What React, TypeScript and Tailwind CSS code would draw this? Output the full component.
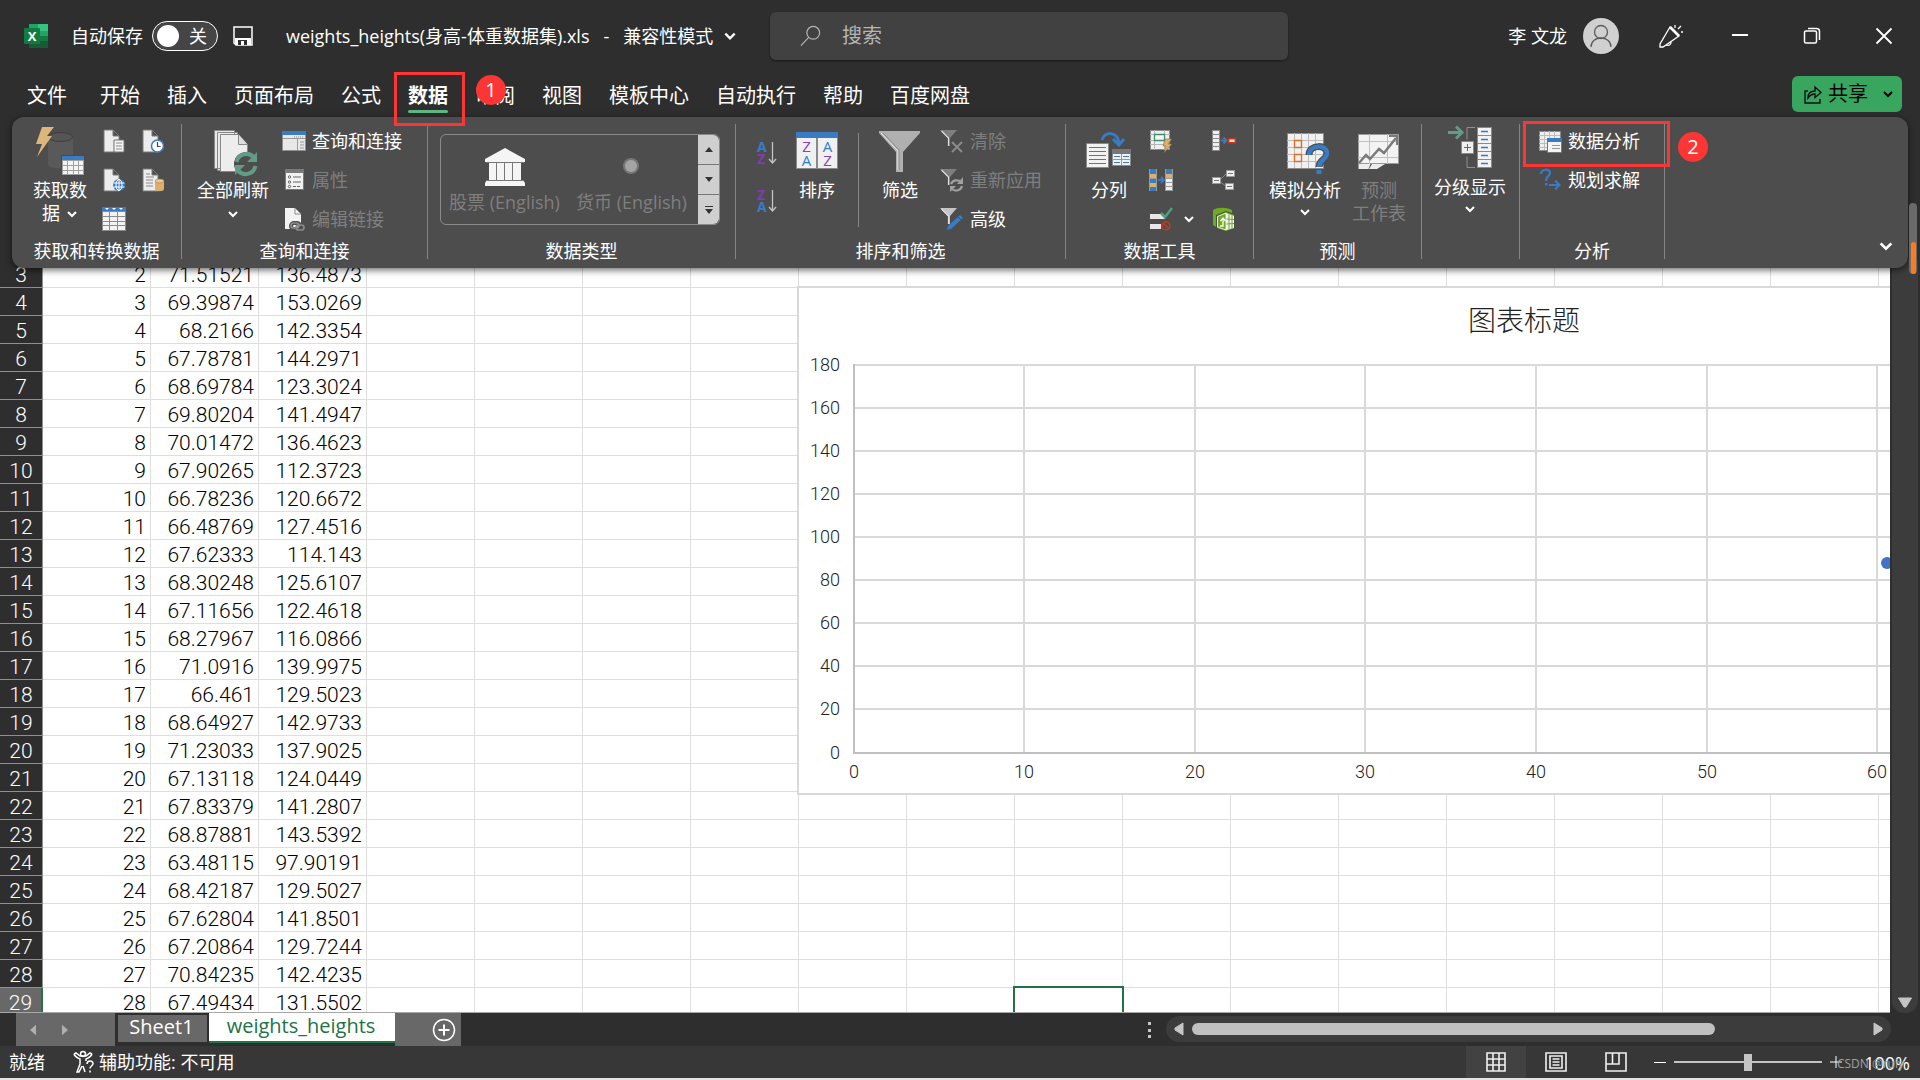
import React, { useState } from "react";
import clsx from "clsx";

const TABS = [
  "文件",
  "开始",
  "插入",
  "页面布局",
  "公式",
  "数据",
  "审阅",
  "视图",
  "模板中心",
  "自动执行",
  "帮助",
  "百度网盘",
];

const ROWS = [
  ["2", "71.51521", "136.4873"],
  ["3", "69.39874", "153.0269"],
  ["4", "68.2166", "142.3354"],
  ["5", "67.78781", "144.2971"],
  ["6", "68.69784", "123.3024"],
  ["7", "69.80204", "141.4947"],
  ["8", "70.01472", "136.4623"],
  ["9", "67.90265", "112.3723"],
  ["10", "66.78236", "120.6672"],
  ["11", "66.48769", "127.4516"],
  ["12", "67.62333", "114.143"],
  ["13", "68.30248", "125.6107"],
  ["14", "67.11656", "122.4618"],
  ["15", "68.27967", "116.0866"],
  ["16", "71.0916", "139.9975"],
  ["17", "66.461", "129.5023"],
  ["18", "68.64927", "142.9733"],
  ["19", "71.23033", "137.9025"],
  ["20", "67.13118", "124.0449"],
  ["21", "67.83379", "141.2807"],
  ["22", "68.87881", "143.5392"],
  ["23", "63.48115", "97.90191"],
  ["24", "68.42187", "129.5027"],
  ["25", "67.62804", "141.8501"],
  ["26", "67.20864", "129.7244"],
  ["27", "70.84235", "142.4235"],
  ["28", "67.49434", "131.5502"],
];

const COLUMNS = Array.from({ length: 18 }, (_, i) => i);
const SELECTED_ROW = 29;
const SELECTED_COL = 9;

const Chevron = ({ className = "" }) => (
  <svg className={clsx("w-3 h-3 shrink-0", className)} viewBox="0 0 12 12" fill="none" stroke="currentColor" strokeWidth="2">
    <path d="M2 4l4 4 4-4" />
  </svg>
);

const Marker = ({ n, className }: { n: number; className: string }) => (
  <span
    className={clsx(
      "absolute z-30 flex h-[30px] w-[30px] items-center justify-center rounded-full bg-[#fc3535] text-xl leading-5 font-normal text-white",
      className
    )}
  >
    {n}
  </span>
);

/* ---------- small ribbon icons, 24x24 ---------- */

const Icon = ({ children }: { children: React.ReactNode }) => (
  <svg className="h-6 w-6 shrink-0" viewBox="0 0 24 24" fill="none">
    {children}
  </svg>
);

const Page = () => <path d="M2 1h9l6 6v16H2z M11 1v6h6" fill="#ececec" stroke="#7a7a7a" />;

const FileTextIcon = () => (
  <Icon>
    <Page />
    <path d="M12 11h10v12H12z" fill="#f5f5f5" stroke="#707070" />
    <path d="M14 14h6M14 17h6M14 20h6" stroke="#8a8a8a" />
  </Icon>
);

const FileClockIcon = () => (
  <Icon>
    <Page />
    <circle cx="16.500" cy="17" r="6" fill="#fff" stroke="#3a7cc4" strokeWidth="1.500" />
    <path d="M16.500 13v4.500h3" stroke="#444" strokeWidth="1.200" />
  </Icon>
);

const FileGlobeIcon = () => (
  <Icon>
    <Page />
    <circle cx="17" cy="17" r="6" fill="#3a7cc4" />
    <ellipse cx="17" cy="17" rx="3" ry="5.500" stroke="#fff" />
    <path d="M11.500 15h11M11.500 19h11M17 11v12" stroke="#fff" />
  </Icon>
);

const FileDbIcon = () => (
  <Icon>
    <Page />
    <path d="M5 9h8M5 12h7M5 15h7M5 18h7M5 6h4" stroke="#8a8a8a" />
    <path d="M14 13v8c0 3 9 3 9 0v-8" fill="#dcb06c" />
    <ellipse cx="18.500" cy="13" rx="4.500" ry="2" fill="#e9c78f" stroke="#a57d3f" strokeWidth=".6" />
  </Icon>
);

const TableIcon = () => (
  <Icon>
    <path d="M0 0h24v24H0z" fill="#8a8a8a" />
    <path d="M0 0h24v4H0z" fill="#3a7cc4" />
    <path d="M3 1h4l-2 2zM10 1h4l-2 2zM17 1h4l-2 2z" fill="#fff" />
    <path d="M1 5h6v4H1zM8 5h7v4H8zM16 5h7v4h-7zM1 10h6v4H1zM8 10h7v4H8zM16 10h7v4h-7zM1 15h6v3H1zM8 15h7v3H8zM16 15h7v3h-7zM1 19h6v4H1zM8 19h7v4H8zM16 19h7v4h-7z" fill="#f3f3f3" />
  </Icon>
);

const QueriesIcon = () => (
  <Icon>
    <path d="M.5 2.500h23v19H.5z" fill="#e8e8e8" stroke="#909090" />
    <path d="M0 2h24v4H0z" fill="#3a7cc4" />
    <path d="M15.500 10v11M1 9.500h22M18 13h4M18 16h4M18 19h4" stroke="#9a9a9a" />
    <path d="M12 8h9" stroke="#888" strokeDasharray="1 1" />
  </Icon>
);

const PropertiesIcon = () => (
  <Icon>
    <path d="M3.500 1.500h18v20h-18z" fill="#f2f2f2" stroke="#7a7a7a" />
    <path d="M3 1h19v4H3z" fill="#7a7a7a" />
    <circle cx="7.500" cy="9" r="1.200" stroke="#666" />
    <circle cx="7.500" cy="14" r="1.200" stroke="#666" />
    <circle cx="7.500" cy="18.500" r="1.200" stroke="#666" />
    <path d="M11 9h8M11 14h8" stroke="#666" />
    <path d="M11 18.500h8" stroke="#666" strokeDasharray="3 1" />
  </Icon>
);

const EditLinksIcon = () => (
  <Icon>
    <path d="M3 1h10l6 6v15H3z" fill="#f3f3f3" />
    <path d="M13 1v6h6" stroke="#888" />
    <rect x="9" y="16" width="9" height="6" rx="3" stroke="#4d4d4d" strokeWidth="4" />
    <rect x="9" y="16" width="8" height="5" rx="2.500" stroke="#8a8a8a" strokeWidth="1.700" />
    <rect x="14" y="18" width="8" height="5" rx="2.500" stroke="#8a8a8a" strokeWidth="1.700" />
  </Icon>
);

const SmallFunnel = ({ fill = "#7e7e7e" }) => (
  <>
    <path d="M0 1h17l-7 8v8H8V9z" fill={fill} />
    <path d="M1.500 2l7 7v8" stroke="#e0e0e0" strokeWidth="1.200" />
  </>
);

const ClearIcon = () => (
  <Icon>
    <SmallFunnel />
    <path d="M12 13l10 10M22 13L12 23" stroke="#8a8a8a" strokeWidth="2" />
  </Icon>
);

const ReapplyIcon = () => (
  <Icon>
    <SmallFunnel />
    <path d="M11 16a6 5.500 0 0 1 10-2M22 18a6 5.500 0 0 1-10 3" stroke="#a0a0a0" strokeWidth="2.200" />
    <path d="M23 9v7h-6zM10 24v-6h6z" fill="#a0a0a0" />
  </Icon>
);

const AdvancedIcon = () => (
  <Icon>
    <SmallFunnel fill="#c4c4c4" />
    <path d="M7 23l1-4L20 8l3 3-12 11z" fill="#3a7cc4" />
    <path d="M18 10l3 3" stroke="#4d4d4d" />
  </Icon>
);

const FlashFillIcon = () => (
  <Icon>
    <path d="M1.500 1.500h19v19h-19z" fill="#efefef" stroke="#8a8a8a" />
    <path d="M1 5.500h20M1 11.500h20M1 15.500h20M5.500 1v20M15.500 1v20" stroke="#b5b5b5" />
    <path d="M5.500 5.500h10v6h-10z" fill="#f6f6f6" stroke="#3f8f70" strokeWidth="1.300" />
    <path d="M16 10h7l-4 5h4l-8 9 2-7h-3z" fill="#dcb067" stroke="#6d5a35" strokeWidth=".5" />
  </Icon>
);

const RemoveDuplicatesIcon = () => (
  <Icon>
    <path d="M0 1h8v22H0z" fill="#9a9a9a" />
    <path d="M1 1h6v5H1zM1 11h6v4H1zM1 19h6v4H1z" fill="#3a7cc4" />
    <path d="M1 6h6v4H1zM1 15h6v4H1z" fill="#dcb067" />
    <path d="M16 1h8v22h-8z" fill="#9a9a9a" />
    <path d="M17 1h6v5h-6z" fill="#3a7cc4" />
    <path d="M17 6h6v4h-6z" fill="#dcb067" />
    <path d="M17 11h6v3h-6zM17 15h6v3h-6zM17 19h6v3h-6z" fill="#eee" />
    <path d="M9 12h5M12 9l3 3-3 3" stroke="#3a7cc4" strokeWidth="1.800" />
  </Icon>
);

const ValidationIcon = () => (
  <Icon>
    <path d="M1 7h11l4 5H1zM1 17h11v5H1z" fill="#e8e8e8" />
    <path d="M12 6l4 4 7-9" stroke="#4f9e83" strokeWidth="2.500" />
    <circle cx="17" cy="19" r="4" stroke="#c13c1f" strokeWidth="1.500" />
    <path d="M14 16l6 6" stroke="#c13c1f" strokeWidth="1.500" />
  </Icon>
);

const ConsolidateIcon = () => (
  <Icon>
    <path d="M0 1h8v21H0z" fill="#8a8a8a" />
    <path d="M1 2h6v3H1zM1 6h6v3H1zM1 10h6v3H1zM1 14h6v3H1zM1 18h6v3H1z" fill="#efefef" />
    <path d="M9 11.500h5M11.500 8.500l3 3-3 3" stroke="#3a7cc4" strokeWidth="1.800" />
    <path d="M16.700 9.700h6.600v4h-6.600z" fill="#f6d9d0" stroke="#c8391c" strokeWidth="1.400" />
  </Icon>
);

const RelationIcon = () => (
  <Icon>
    <path d="M7 13l8-8M7 13l8 6" stroke="#8a8a8a" />
    <path d="M.5 9.500h8v6h-8zM14.500 2.500h8v6h-8zM13.500 15.500h8v6h-8z" fill="#efefef" stroke="#9a9a9a" />
    <path d="M2 12.500h5M16 5.500h5M15 18.500h5" stroke="#777" />
  </Icon>
);

const DataModelIcon = () => (
  <Icon>
    <path d="M1 3c5-3 13-3 19 0v3L14 4 4 8v12l-3-2z" fill="#6eaa23" />
    <path d="M5 9l9-4 8 3v13l-8 3-9-3z" fill="#6eaa23" />
    <path d="M14 6l8 3v12l-8 2z" fill="#f2f2f2" />
    <path d="M14 12l8 .5M14 17l8-.5M17 7v15M20 8v14" stroke="#6eaa23" />
    <path d="M5.500 20V9.500L14 6v17z" stroke="#fff" strokeWidth=".8" />
    <path d="M8 19h3v-7M8.500 14l2.500-3 2.500 3" stroke="#fff" strokeWidth="1.300" />
  </Icon>
);

const AnalysisIcon = () => (
  <Icon>
    <path d="M1.500 2.500h21v19h-21z" fill="#eee" stroke="#8a8a8a" />
    <path d="M1 6.500h21M1 10.500h21M1 14.500h21M1 18.500h21M6.500 2v19M11.500 2v19M16.500 2v19" stroke="#bdbdbd" />
    <path d="M9.500 9.500h14v14h-14z" fill="#f4f4f4" stroke="#777" />
    <path d="M9 9h15v4H9z" fill="#3a7cc4" />
    <path d="M14 16.500h8M14 19.500h8" stroke="#999" />
  </Icon>
);

const SolverIcon = () => (
  <Icon>
    <path d="M3 6c0-5 9-6 9-1 0 3-4 3-4 8" stroke="#3a7cc4" strokeWidth="2.200" />
    <path d="M7 15h2.500v2.500H7z" fill="#3a7cc4" />
    <path d="M11 17h10M17 12.500l4.500 4.500-4.500 4.500" stroke="#3a7cc4" strokeWidth="2" />
  </Icon>
);

/* ---------- large ribbon icons ---------- */

const GetDataIcon = () => (
  <svg className="h-[54px] w-14" viewBox="0 0 56 54">
    <path d="M16 13v26c0 6 25 6 25 0V13z" fill="#595959" />
    <ellipse cx="28.500" cy="12" rx="12" ry="4.500" fill="#555" stroke="#3e3e3e" />
    <path d="M10 2h12l-7 9h5L5 32l5-13H4z" fill="#dcb67a" />
    <path d="M29 30h24v21H29z" fill="#4a4a4a" />
    <path d="M30 31h22v19H30z" fill="#a0a0a0" />
    <path d="M30 31h22v4H30z" fill="#3a7cc4" />
    <path d="M31 36h4v4h-4zM36 36h5v4h-5zM42 36h4v4h-4zM47 36h4v4h-4zM31 41h4v4h-4zM36 41h5v4h-5zM42 41h4v4h-4zM47 41h4v4h-4zM31 46h4v3h-4zM36 46h5v3h-5zM42 46h4v3h-4zM47 46h4v3h-4z" fill="#f4f4f4" />
  </svg>
);

const RefreshIcon = () => (
  <svg className="h-[54px] w-[50px]" viewBox="0 0 50 54" fill="none">
    <path d="M6.500 5.500h20v38h-20zM9.500 7.500h20v38h-20z" fill="#e8e8e8" stroke="#888" />
    <path d="M12.500 9.500h18l9 10v27h-27z" fill="#ededed" stroke="#888" />
    <path d="M30.500 9.500v10h9" fill="#ddd" stroke="#888" />
    <circle cx="38" cy="39" r="12" fill="#4d4d4d" />
    <path d="M28.500 37a10 10 0 0 1 17-5M47.500 41a10 10 0 0 1-17 5" stroke="#629c87" strokeWidth="4" />
    <path d="M49 27v10H39zM27 50V40h10z" fill="#629c87" />
  </svg>
);

const SortIcon = () => (
  <svg className="h-[54px] w-11" viewBox="0 0 44 54" fontFamily="Open Sans, sans-serif" fontSize="15" fontWeight="400">
    <path d="M1 8h42v36H1z" fill="#8a8a8a" />
    <path d="M1 7h42v6H1z" fill="#3a7cc4" />
    <path d="M2 13h19v30H2zM23 13h19v30H23z" fill="#f0f0f0" />
    <g textAnchor="middle">
      <text x="11.500" y="27" fill="#8a43b3">Z</text>
      <text x="11.500" y="41" fill="#2f7ec7">A</text>
      <text x="32.500" y="27" fill="#2f7ec7">A</text>
      <text x="32.500" y="41" fill="#8a43b3">Z</text>
    </g>
  </svg>
);

const SortOrderIcon = ({ desc = false }) => (
  <svg className="h-6 w-6 overflow-visible" viewBox="0 0 24 24" fontFamily="Open Sans, sans-serif" fontSize="14" fontWeight="700">
    <text x="1" y="11" fill={desc ? "#7d3fa8" : "#3a7cc4"}>{desc ? "Z" : "A"}</text>
    <text x="1" y="23" fill={desc ? "#3a7cc4" : "#7d3fa8"}>{desc ? "A" : "Z"}</text>
    <path d="M16.500 1v21M13 18l3.500 4 3.500-4" fill="none" stroke="#c4c4c4" strokeWidth="1.300" />
  </svg>
);

const FunnelIcon = () => (
  <svg className="h-[54px] w-[42px]" viewBox="0 0 42 54" fill="none">
    <path d="M0 6h41v2L24 27v20h-7V27L0 8z" fill="#b0b0b0" />
    <path d="M2 8l17 18v19" stroke="#ececec" />
    <path d="M4 8l16 17v20" stroke="#8a8a8a" />
  </svg>
);

const SplitIcon = () => (
  <svg className="h-[54px] w-[46px]" viewBox="0 0 46 54" fill="none">
    <path d="M.5 18.500h22v24H.5z" fill="#f2f2f2" stroke="#8a8a8a" />
    <path d="M3 22.500h17M3 26.500h17M3 30.500h17M3 34.500h17M3 38.500h17" stroke="#3a7cc4" />
    <path d="M26.500 24.500h18v16h-18z" fill="#f2f2f2" stroke="#8a8a8a" />
    <path d="M26 24h19v5H26z" fill="#777" />
    <path d="M35.500 29v11M26 34.500h19" stroke="#999" />
    <path d="M28 31.500h6M37 31.500h6M28 37.500h6M37 37.500h6" stroke="#3a7cc4" />
    <path d="M16 15c2-8 15-10 17 3" stroke="#3a7cc4" strokeWidth="3" />
    <path d="M27 14l6 6 5-6" stroke="#3a7cc4" strokeWidth="3" />
  </svg>
);

const WhatIfIcon = () => (
  <svg className="h-[54px] w-12" viewBox="0 0 48 54" fill="none">
    <path d="M6.500 8.500h36v35h-36z" fill="#f1f1f1" stroke="#8a8a8a" />
    <path d="M6 15.500h36M6 22.500h36M6 29.500h36M6 36.500h36M13.500 8v35M20.500 8v35M27.500 8v35M34.500 8v35" stroke="#bcbcbc" />
    <path d="M13.500 15.500h7v7h-7zM13.500 29.500h7v7h-7z" stroke="#d9702a" strokeWidth="1.400" />
    <path d="M28 30c0-11 19-11 18-1-1 6-8 6-8 13" stroke="#4d4d4d" strokeWidth="7" />
    <path d="M28 30c0-11 19-11 18-1-1 6-8 6-8 13" stroke="#3a7cc4" strokeWidth="4.500" />
    <path d="M35.500 45h5v4h-5z" fill="#3a7cc4" />
  </svg>
);

const ForecastIcon = () => (
  <svg className="h-[54px] w-[42px]" viewBox="0 0 42 54" fill="none">
    <path d="M.5 39h12l-2 5H.5zM14 39h13l-8 5h-8z" fill="#ececec" />
    <path d="M.5 9.500h40v29H.5z" fill="#f3f3f3" stroke="#9a9a9a" />
    <path d="M0 16.500h40M0 32.500h40M11.500 9v30M29.500 9v30" stroke="#c0c0c0" />
    <path d="M1 38l7-8 4 4 9-10 5 4 12-15" stroke="#7a7a7a" strokeWidth="2.500" />
    <path d="M31 11h8v9" stroke="#7a7a7a" strokeWidth="2" />
  </svg>
);

const OutlineIcon = () => (
  <svg className="h-[51px] w-12" viewBox="0 0 48 51" fill="none">
    <path d="M2 7.500h14M10 1.500l6 6-6 6" stroke="#629c87" strokeWidth="3" />
    <path d="M29 2.500h-8v12M29 42.500h-8v-11" stroke="#8f8f8f" />
    <path d="M15.500 16.500h12v12h-12z" fill="#f0f0f0" stroke="#8a8a8a" />
    <path d="M21.500 19v7M18 22.500h7" stroke="#666" />
    <path d="M31 2h15v41H31z" fill="#8a8a8a" />
    <path d="M32 3h13v7H32zM32 11h13v7H32zM32 19h13v7H32zM32 27h13v7H32zM32 35h13v7H32z" fill="#f2f2f2" />
    <path d="M35 6.500h7M35 14.500h7M35 22.500h7M35 30.500h7M35 38.500h7" stroke="#3a7cc4" strokeWidth="1.300" />
  </svg>
);

const BankIcon = () => (
  <svg className="h-10 w-[42px]" viewBox="0 0 42 40">
    <path d="M21 1l20 11v3H1v-3zM5 16h32v17H5zM3 33h36l2 3v3H1v-3z" fill="#f5f5f5" />
    <path d="M12.500 16v17M20.500 16v17M28.500 16v17M2 15.500h38M3 33.500h36" stroke="#777" />
  </svg>
);

/* ---------- ribbon parts ---------- */

const Group = ({ label, className, children }: { label: string; className: string; children: React.ReactNode }) => (
  <div className={clsx("flex shrink-0 flex-col pt-1", className)}>
    <div className="flex h-[117px] items-start">{children}</div>
    <div className="mt-1 text-center leading-[18px]">{label}</div>
  </div>
);

const Separator = () => <span className="mt-[7px] mb-[9px] w-px shrink-0 bg-[#858585]" />;

const BigButton = ({
  icon,
  label,
  className,
}: {
  icon: React.ReactNode;
  label: React.ReactNode;
  className?: string;
}) => (
  <button className={clsx("flex shrink-0 flex-col items-center pt-1 leading-[23px] whitespace-nowrap", className)}>
    {icon}
    {label}
  </button>
);

const RowButton = ({ icon, label, disabled = false }: { icon: React.ReactNode; label: string; disabled?: boolean }) => (
  <button
    disabled={disabled}
    className={clsx("flex h-[39px] items-center gap-[6px] whitespace-nowrap", disabled && "text-[#7f7f7f]")}
  >
    {icon}
    {label}
  </button>
);

const IconButton = ({ icon, label }: { icon: React.ReactNode; label: string }) => (
  <button aria-label={label} className="flex h-[39px] items-center justify-center">
    {icon}
  </button>
);

const TitleBar = () => {
  const [autoSave, setAutoSave] = useState(false);

  return (
    <header className="flex h-[72px] shrink-0 items-center text-lg">
      <div className="flex w-[770px] shrink-0 items-center pl-6 whitespace-nowrap">
        <svg className="h-[30px] w-6" viewBox="0 0 24 30">
          <path d="M5 3h10v8H5z" fill="#21a366" />
          <path d="M14 3h10v8H14z" fill="#33c481" />
          <path d="M5 10h10v10H5z" fill="#107c41" />
          <path d="M14 10h10v6H14z" fill="#21a366" />
          <path d="M14 15h10v6H14z" fill="#107c41" />
          <path d="M5 20h19v7H5z" fill="#185c37" />
          <rect y="7" width="16" height="16" rx="1" fill="#107c41" />
          <text x="8" y="20" fill="#fff" fontSize="13" fontWeight="700" textAnchor="middle" fontFamily="Open Sans, sans-serif">X</text>
        </svg>
        <label className="ml-[23px] flex items-center gap-[9px]">
          自动保存
          <input
            type="checkbox"
            className="sr-only"
            checked={autoSave}
            onChange={(e) => setAutoSave(e.target.checked)}
          />
          <span className="flex h-[30px] w-[66px] items-center justify-between rounded-full border border-white bg-[#454545] pr-2.5 pl-1">
            <span className="h-[22px] w-[22px] rounded-full bg-white" />
            关
          </span>
        </label>
        <button aria-label="保存" className="ml-[15px]">
          <svg className="h-5 w-5" viewBox="0 0 20 20">
            <path d="M1 1h18v18H3l-2-2z" fill="none" stroke="#fff" strokeWidth="1.500" />
            <path d="M2 12h16v7H2z" fill="#fff" />
            <path d="M5 14h9v5H5z" fill="#2e2e2e" />
            <path d="M8 15h3v4H8z" fill="#fff" />
          </svg>
        </button>
        <button className="ml-[33px] flex items-center gap-2.5 whitespace-pre">
          {"weights_heights(身高-体重数据集).xls   -   兼容性模式"}
          <Chevron className="h-3.5 w-3.5" />
        </button>
      </div>
      <label className="flex h-12 w-[518px] items-center rounded-md bg-[#414141] pl-[30px] shadow-[0_1px_2px_#1a1a1a]">
        <svg className="h-6 w-6" viewBox="0 0 24 24" fill="none" stroke="#b5b5b5" strokeWidth="1.300">
          <circle cx="14.500" cy="8.500" r="7" />
          <path d="M9.500 13.500L1 22.500" />
        </svg>
        <input
          type="search"
          aria-label="搜索"
          placeholder="搜索"
          className="ml-5 w-full bg-transparent text-xl outline-none placeholder:text-[#b5b5b5]"
        />
      </label>
      <div className="ml-auto flex items-center pr-[27px]">
        <span>李 文龙</span>
        <span className="ml-4 h-9 w-9 rounded-full bg-[#d0d0d0]">
          <svg className="h-9 w-9" viewBox="0 0 36 36" fill="none" stroke="#5a5a5a" strokeWidth="1.300">
            <circle cx="18" cy="14" r="6.500" />
            <path d="M8 29c0-12 20-12 20 0" />
          </svg>
        </span>
        <button aria-label="画笔" className="ml-10">
          <svg className="h-6 w-6" viewBox="0 0 24 24" fill="none" stroke="#fff" strokeWidth="1.300">
            <path d="M11 3L1 20v3h3l16-11z" />
            <path d="M11 3l9 9" strokeWidth="2.600" />
            <path d="M16 1v3M22 2l-3 3M22 8h2M7 21c3 1 5 0 5-3" />
          </svg>
        </button>
        <button aria-label="最小化" className="ml-12">
          <svg className="h-5 w-[18px]" viewBox="0 0 18 20" stroke="#fff" strokeWidth="2">
            <path d="M1 9h16" />
          </svg>
        </button>
        <button aria-label="还原" className="ml-[54px]">
          <svg className="h-[18px] w-[18px]" viewBox="0 0 18 18" fill="none" stroke="#fff" strokeWidth="1.500">
            <rect x="1.500" y="4" width="12" height="12" rx="1.500" />
            <path d="M5 1.500h8.500a3 3 0 0 1 3 3V13" />
          </svg>
        </button>
        <button aria-label="关闭" className="ml-[54px]">
          <svg className="h-[18px] w-[18px]" viewBox="0 0 18 18" stroke="#fff" strokeWidth="1.800">
            <path d="M1.500 1.500l15 15M16.500 1.500l-15 15" />
          </svg>
        </button>
      </div>
    </header>
  );
};

const TabBar = () => (
  <nav className="flex h-[45px] shrink-0 items-center pr-[18px] pl-[27px] text-xl leading-6">
    <div className="flex items-center gap-[27px] pt-0.5">
      {TABS.map((tab) => (
        <button
          key={tab}
          className={clsx("relative whitespace-nowrap", tab === "文件" && "mr-1.5", tab === "数据" && "font-bold")}
        >
          {tab}
          {tab === "数据" && (
            <>
              <span className="absolute top-[26px] left-0 h-[3px] w-full rounded-full bg-[#5fb980]" />
              <span className="absolute -top-3 -left-[14px] z-20 h-[54px] w-[71px] border-3 border-[#fc3535]" />
              <Marker n={1} className="-top-[9px] left-[68px]" />
            </>
          )}
        </button>
      ))}
    </div>
    <button className="mb-0.5 ml-auto flex h-9 w-[110px] items-center rounded-md bg-[#38a65f] pl-3 text-black">
      <svg className="h-5 w-[18px]" viewBox="0 0 18 20" fill="none" stroke="#111" strokeWidth="1.400">
        <path d="M4 7H1v12h15v-4" />
        <path d="M4 14c0-5 3-7 7-7V3l6 5.500-6 5V10c-3 0-5 1-7 4z" />
      </svg>
      <span className="ml-1.5">共享</span>
      <Chevron className="ml-auto mr-2" />
    </button>
  </nav>
);

const Ribbon = () => (
  <section className="relative z-10 mx-3 flex h-[151px] shrink-0 rounded-xl bg-[#4d4d4d] text-lg text-white shadow-[0_2px_7px_rgba(0,0,0,0.600)]">
    <Group label="获取和转换数据" className="w-[169px]">
      <BigButton
        className="ml-5 w-14"
        icon={<GetDataIcon />}
        label={
          <>
            <span>获取数</span>
            <span className="flex items-center gap-1.5">
              据 <Chevron />
            </span>
          </>
        }
      />
      <div className="ml-1.5 grid w-[78px] grid-cols-2">
        <IconButton label="从文本/CSV" icon={<FileTextIcon />} />
        <IconButton label="最近使用的源" icon={<FileClockIcon />} />
        <IconButton label="自网站" icon={<FileGlobeIcon />} />
        <IconButton label="现有连接" icon={<FileDbIcon />} />
        <IconButton label="来自表格" icon={<TableIcon />} />
      </div>
    </Group>
    <Separator />
    <Group label="查询和连接" className="w-[245px]">
      <BigButton className="ml-[15px] w-[72px]" icon={<RefreshIcon />} label={<><span>全部刷新</span><Chevron className="mt-1.5" /></>} />
      <div className="ml-[13px]">
        <RowButton icon={<QueriesIcon />} label="查询和连接" />
        <RowButton icon={<PropertiesIcon />} label="属性" disabled />
        <RowButton icon={<EditLinksIcon />} label="编辑链接" disabled />
      </div>
    </Group>
    <Separator />
    <Group label="数据类型" className="w-[307px]">
      <div className="mt-[13px] ml-3 flex h-[91px] w-[280px] rounded-md border border-[#8a8a8a] text-[#7f7f7f]">
        <button disabled className="flex w-[127px] flex-col items-center pt-3 leading-[30px] whitespace-nowrap">
          <BankIcon />
          股票 (English)
        </button>
        <button disabled className="flex w-[127px] flex-col items-center pt-3 leading-[30px] whitespace-nowrap">
          <svg className="h-10 w-10" viewBox="0 0 40 40">
            <circle cx="19" cy="19" r="8" fill="#777" />
            <circle cx="19" cy="19" r="6" fill="#a4a4a4" />
          </svg>
          货币 (English)
        </button>
        <div className="ml-auto flex w-[21px] flex-col gap-px overflow-hidden rounded-r-md bg-[#777]">
          {["M6 12l4-5 4 5z", "M6 7l4 5 4-5z", "M6 6h8v1H6zM6 9l4 5 4-5z"].map((d, i) => (
            <button
              key={d}
              aria-label={["上一行", "下一行", "更多"][i]}
              className="flex flex-1 items-center justify-center bg-[#cfcfcf]"
            >
              <svg className="h-5 w-5" viewBox="0 0 20 20">
                <path d={d} fill="#333" />
              </svg>
            </button>
          ))}
        </div>
      </div>
    </Group>
    <Separator />
    <Group label="排序和筛选" className="w-[329px]">
      <div className="ml-5 flex flex-col gap-6 pt-5">
        <button aria-label="升序">
          <SortOrderIcon />
        </button>
        <button aria-label="降序">
          <SortOrderIcon desc />
        </button>
      </div>
      <BigButton className="ml-[15px] w-11" icon={<SortIcon />} label="排序" />
      <span className="mt-3 ml-[19px] h-[94px] w-px bg-[#858585]" />
      <BigButton className="ml-5 w-[42px]" icon={<FunnelIcon />} label="筛选" />
      <div className="ml-[19px]">
        <RowButton icon={<ClearIcon />} label="清除" disabled />
        <RowButton icon={<ReapplyIcon />} label="重新应用" disabled />
        <RowButton icon={<AdvancedIcon />} label="高级" />
      </div>
    </Group>
    <Separator />
    <Group label="数据工具" className="w-[187px]">
      <BigButton className="ml-5 w-[46px]" icon={<SplitIcon />} label="分列" />
      <div className="ml-[17px] flex w-[63px] flex-col items-start">
        <IconButton label="快速填充" icon={<FlashFillIcon />} />
        <IconButton label="删除重复值" icon={<RemoveDuplicatesIcon />} />
        <button aria-label="数据验证" className="flex h-[39px] items-center gap-2.5">
          <ValidationIcon />
          <Chevron />
        </button>
      </div>
      <div className="flex flex-col">
        <IconButton label="合并计算" icon={<ConsolidateIcon />} />
        <IconButton label="关系" icon={<RelationIcon />} />
        <IconButton label="管理数据模型" icon={<DataModelIcon />} />
      </div>
    </Group>
    <Separator />
    <Group label="预测" className="w-[167px]">
      <BigButton className="ml-[15px] w-[72px]" icon={<WhatIfIcon />} label={<><span>模拟分析</span><Chevron className="mt-1" /></>} />
      <BigButton
        className="ml-2.5 w-14 text-[#7f7f7f]"
        icon={<ForecastIcon />}
        label={
          <>
            <span>预测</span>
            <span>工作表</span>
          </>
        }
      />
    </Group>
    <Separator />
    <div className="flex w-[97px] shrink-0 pt-1">
      <BigButton className="ml-3 w-[72px]" icon={<OutlineIcon />} label={<><span>分级显示</span><Chevron className="mt-1" /></>} />
    </div>
    <Separator />
    <Group label="分析" className="w-[144px]">
      <div className="relative ml-[18px]">
        <RowButton icon={<AnalysisIcon />} label="数据分析" />
        <RowButton icon={<SolverIcon />} label="规划求解" />
        <span className="absolute top-0 -left-[15px] z-20 h-[46px] w-[147px] border-3 border-[#fc3535]" />
        <Marker n={2} className="top-[11px] left-[140px]" />
      </div>
    </Group>
    <Separator />
    <button aria-label="折叠功能区" className="mt-auto mr-3.5 mb-3.5 ml-auto">
      <Chevron className="h-4 w-4" />
    </button>
  </section>
);

const Chart = () => {
  const xs = [57, 227, 398, 568, 739, 910, 1080];
  const ys = [79, 122, 165, 208, 251, 294, 337, 380, 423, 467];

  return (
    <svg
      className="absolute top-[26px] left-[797px] h-[509px] w-[1280px]"
      viewBox="0 0 1280 509"
      fill="none"
      stroke="#d9d9d9"
      strokeWidth="2"
    >
      <rect x="1" y="1" width="1278" height="507" fill="#fff" />
      {ys.map((y) => (
        <path key={y} d={`M57 ${y}H1280`} />
      ))}
      {xs.map((x) => (
        <path key={x} d={`M${x} 79V467`} />
      ))}
      <path d="M57 78V467H1280" stroke="#bfbfbf" />
      <g fill="#222" stroke="none" fontSize="18" fontWeight="300" fontFamily="Roboto, sans-serif">
        {ys.map((y, i) => (
          <text key={y} x="43" y={y + 6} textAnchor="end">
            {180 - i * 20}
          </text>
        ))}
        {xs.map((x, i) => (
          <text key={x} x={x} y="492" textAnchor="middle">
            {i * 10}
          </text>
        ))}
      </g>
      <text
        x="727"
        y="45"
        textAnchor="middle"
        fill="#222"
        stroke="none"
        fontSize="28"
        fontWeight="300"
        fontFamily="Noto Sans CJK SC, sans-serif"
      >
        图表标题
      </text>
      <circle cx="1090" cy="277" r="6" fill="#4472c4" stroke="none" />
    </svg>
  );
};

const Sheet = () => (
  <main className="-mt-2 flex min-h-0 flex-1">
    <div className="relative min-w-0 flex-1 overflow-hidden border-b border-[#a8a8a8] bg-white">
      <table className="w-max table-fixed border-separate border-spacing-0 font-['Roboto',sans-serif] text-[21px] leading-[23px] font-light text-black">
        <tbody>
          {ROWS.map((row, r) => (
            <tr key={row[0]} className="h-7">
              <th
                className={clsx(
                  "w-[43px] min-w-[43px] border-r border-b border-[#8f8f8f] p-0 pt-1 font-light text-white",
                  r + 3 === SELECTED_ROW ? "border-r-2 border-r-[#217346] bg-[#686868]" : "bg-[#2e2e2e]"
                )}
              >
                {r + 3}
              </th>
              {COLUMNS.map((c) => (
                <td key={c} className="relative w-[108px] min-w-[108px] border-r border-b border-[#dedede] p-0 pt-1 pr-1 text-right">
                  {row[c]}
                  {r + 3 === SELECTED_ROW && c === SELECTED_COL && (
                    <span className="absolute -top-[2px] -left-[2px] h-[30px] w-[111px] border-2 border-[#217346]" />
                  )}
                </td>
              ))}
            </tr>
          ))}
        </tbody>
      </table>
      <Chart />
    </div>
    <div className="flex w-[30px] shrink-0 bg-[#2e2e2e] px-0.5">
      <div className="flex w-full flex-col justify-end rounded-b-xl bg-[#3c3c3c]">
        <button aria-label="向下滚动" className="flex h-5 items-center justify-center">
          <svg className="h-3.5 w-4" viewBox="0 0 16 14">
            <path d="M1.500 2h13l-5.500 9h-2z" fill="#c4c4c4" stroke="#c4c4c4" strokeLinejoin="round" />
          </svg>
        </button>
      </div>
    </div>
  </main>
);

const SheetTabs = () => (
  <div className="flex h-[33px] shrink-0 items-stretch bg-[#2e2e2e] pl-4 text-xl leading-6">
    <div className="flex w-[99px] items-center gap-5 bg-[#686868] pl-[11px]">
      {["M9 1v14L1 8z", "M1 1v14l8-7z"].map((d, i) => (
        <button key={d} aria-label={i ? "下一张" : "上一张"}>
          <svg className="h-3 w-3" viewBox="0 0 10 16">
            <path d={d} fill="#b0b0b0" />
          </svg>
        </button>
      ))}
    </div>
    <button className="mt-0.5 mb-1 ml-[3px] w-[89px] bg-[#686868] pr-0.5 pb-2">Sheet1</button>
    <button className="mb-[3px] ml-[2px] w-[186px] border-b-2 border-[#217346] bg-white pr-0.5 pb-0.5 text-[#217346]">
      weights_heights
    </button>
    <div className="flex w-[66px] items-center bg-[#686868] pl-[37px]">
      <button aria-label="新工作表">
        <svg className="h-6 w-6" viewBox="0 0 24 24" fill="none" stroke="#fff" strokeWidth="1.500">
          <circle cx="12" cy="12" r="10.500" />
          <path d="M12 6.500v11M6.500 12h11" strokeWidth="2" />
        </svg>
      </button>
    </div>
    <span className="mr-[15px] ml-auto h-4 self-center border-l-[3px] border-dotted border-[#c8c8c8]" />
    <div className="mt-[3px] mr-[29px] mb-1 flex w-[725px] items-center rounded-full bg-[#3c3c3c] px-[7px]">
      <button aria-label="向左滚动">
        <svg className="h-3.5 w-3" viewBox="0 0 12 14">
          <path d="M10 1v12L2 8V6z" fill="#c4c4c4" stroke="#c4c4c4" strokeLinejoin="round" />
        </svg>
      </button>
      <span className="ml-[7px] h-3 w-[523px] rounded-full bg-[#c0c0c0]" />
      <button aria-label="向右滚动" className="ml-auto">
        <svg className="h-3.5 w-3" viewBox="0 0 12 14">
          <path d="M2 1v12l8-5V6z" fill="#c4c4c4" stroke="#c4c4c4" strokeLinejoin="round" />
        </svg>
      </button>
    </div>
  </div>
);

const StatusBar = () => {
  const [zoom, setZoom] = useState(100);

  return (
    <footer className="relative flex h-[34px] shrink-0 items-center border-b-2 border-[#e4e4e4] bg-[#373737] pl-[9px] text-lg leading-6">
      <span>就绪</span>
      <button className="ml-7 flex items-center gap-1">
        <svg className="h-6 w-[22px]" viewBox="0 0 22 24" fill="none" stroke="#fff" strokeWidth="1.500">
          <circle cx="10" cy="4" r="2.500" />
          <path d="M1 4c1 3 4 4 6 5v5l-3 8h2l3-6M19 4c-1 3-4 4-6 5v2M1 4l2-1 4 3h6l4-3 2 1M10 16l2 6" />
          <path d="M14 14c0-4 6-4 6-.5 0 2.500-3 2.500-3 5M17 20.500v2" />
        </svg>
        辅助功能: 不可用
      </button>
      <div className="ml-auto flex h-full items-center">
        <button aria-label="普通" className="flex h-full w-[60px] items-center justify-center bg-[#424242]">
          <svg className="h-5 w-5" viewBox="0 0 20 20" fill="none" stroke="#f0f0f0" strokeWidth="1.600">
            <path d="M1 1h18v18H1zM1 7h18M1 13h18M7 1v18M13 1v18" />
          </svg>
        </button>
        <button aria-label="页面布局" className="flex w-[60px] items-center justify-center">
          <svg className="h-5 w-[22px]" viewBox="0 0 22 20" fill="none" stroke="#f0f0f0" strokeWidth="1.600">
            <path d="M1 1h20v18H1zM5 4h12v12H5zM7.500 7h7M7.500 10h7M7.500 13h7" />
          </svg>
        </button>
        <button aria-label="分页预览" className="flex w-[60px] items-center justify-center">
          <svg className="h-5 w-[22px]" viewBox="0 0 22 20" fill="none" stroke="#f0f0f0" strokeWidth="1.600">
            <path d="M1 1h20v18H1zM1 12h13V1M7.500 1v11" />
          </svg>
        </button>
        <button aria-label="缩小" className="ml-2 h-px w-3 bg-white" />
        <input
          type="range"
          aria-label="显示比例"
          min={10}
          max={190}
          value={zoom}
          onChange={(e) => setZoom(Number(e.target.value))}
          className="mx-2 h-0.5 w-[148px] appearance-none bg-[#c4c4c4] [&::-webkit-slider-thumb]:h-[17px] [&::-webkit-slider-thumb]:w-2 [&::-webkit-slider-thumb]:appearance-none [&::-webkit-slider-thumb]:bg-[#c4c4c4]"
        />
        <button aria-label="放大">
          <svg className="h-3 w-3" viewBox="0 0 12 12" stroke="#fff">
            <path d="M6 0v12M0 6h12" />
          </svg>
        </button>
        <button className="mr-[10px] ml-[22px] pt-px">{zoom}%</button>
      </div>
      <span className="absolute top-2.5 right-4 text-xs leading-4 text-[#a0a0a0]">CSDN @ruiy</span>
    </footer>
  );
};

const App = () => {
  return (
    <div className="relative flex h-screen flex-col overflow-hidden bg-[#2e2e2e] font-['Open_Sans','Noto_Sans_CJK_SC',sans-serif] text-white">
      <TitleBar />
      <TabBar />
      <Ribbon />
      <Sheet />
      <SheetTabs />
      <StatusBar />
      <span className="absolute top-[203px] right-[3px] z-20 flex h-[71px] w-2 items-end justify-center rounded-full bg-[#6a6a6a]">
        <span className="h-8 w-[5px] rounded-full bg-[#ff7a1f]" />
      </span>
    </div>
  );
};

export default App;
